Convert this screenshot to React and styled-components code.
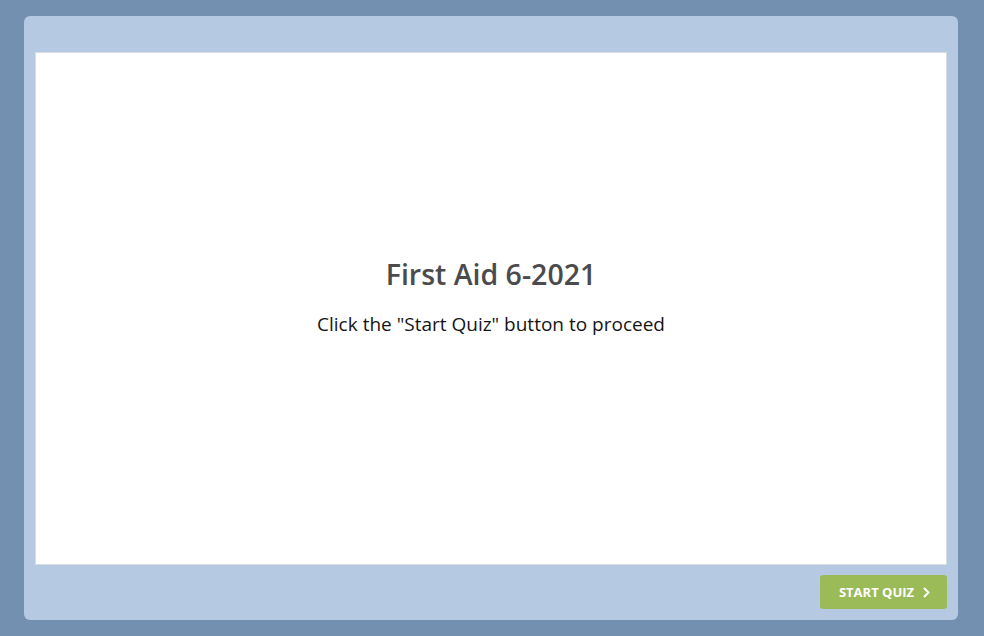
import React from 'react';
import styled, { createGlobalStyle } from 'styled-components';

const GlobalStyle = createGlobalStyle`
  html, body {
    margin: 0;
    padding: 0;
    background: #7490b0;
    font-family: "Open Sans", "Liberation Sans", sans-serif;
  }
`;

const Page = styled.div`
  width: 984px;
  height: 636px;
  box-sizing: border-box;
  padding: 16px 26px 16px 24px;
  display: flex;
`;

const Panel = styled.div`
  flex: 1;
  background: #b5cae2;
  border-radius: 6px;
  padding: 36px 11px 11px 11px;
  display: flex;
  flex-direction: column;
  gap: 10px;
`;

const Slide = styled.div`
  flex: 1;
  background: #ffffff;
  border: 1px solid #d9dde2;
  display: flex;
  flex-direction: column;
  align-items: center;
  justify-content: center;
  padding-bottom: 24px;
`;

const Title = styled.h1`
  margin: 0;
  font-size: 28.5px;
  line-height: 1.36;
  font-weight: 600;
  color: #4b4b4d;
`;

const Subtitle = styled.p`
  margin: 19px 0 0;
  font-size: 19px;
  line-height: 1.36;
  color: #151515;
`;

const Footer = styled.div`
  display: flex;
  justify-content: flex-end;
`;

const StartButton = styled.button`
  height: 34px;
  width: 127px;
  border: none;
  border-radius: 3px;
  background: #9bbb59;
  color: #ffffff;
  font-family: "Open Sans", "Liberation Sans", sans-serif;
  font-size: 13px;
  font-weight: 700;
  display: flex;
  align-items: center;
  justify-content: center;
  gap: 8px;
  cursor: pointer;
  padding: 0 0 0 2px;
`;

export default function App() {
  return (
    <>
      <GlobalStyle />
      <Page>
        <Panel>
          <Slide>
            <Title>First Aid 6-2021</Title>
            <Subtitle>Click the "Start Quiz" button to proceed</Subtitle>
          </Slide>
          <Footer>
            <StartButton>
              START QUIZ
              <svg width="8" height="13" viewBox="0 0 8 13">
                <path d="M2 2 L6.5 6.5 L2 11" fill="none" stroke="#fff" strokeWidth="2" />
              </svg>
            </StartButton>
          </Footer>
        </Panel>
      </Page>
    </>
  );
}
